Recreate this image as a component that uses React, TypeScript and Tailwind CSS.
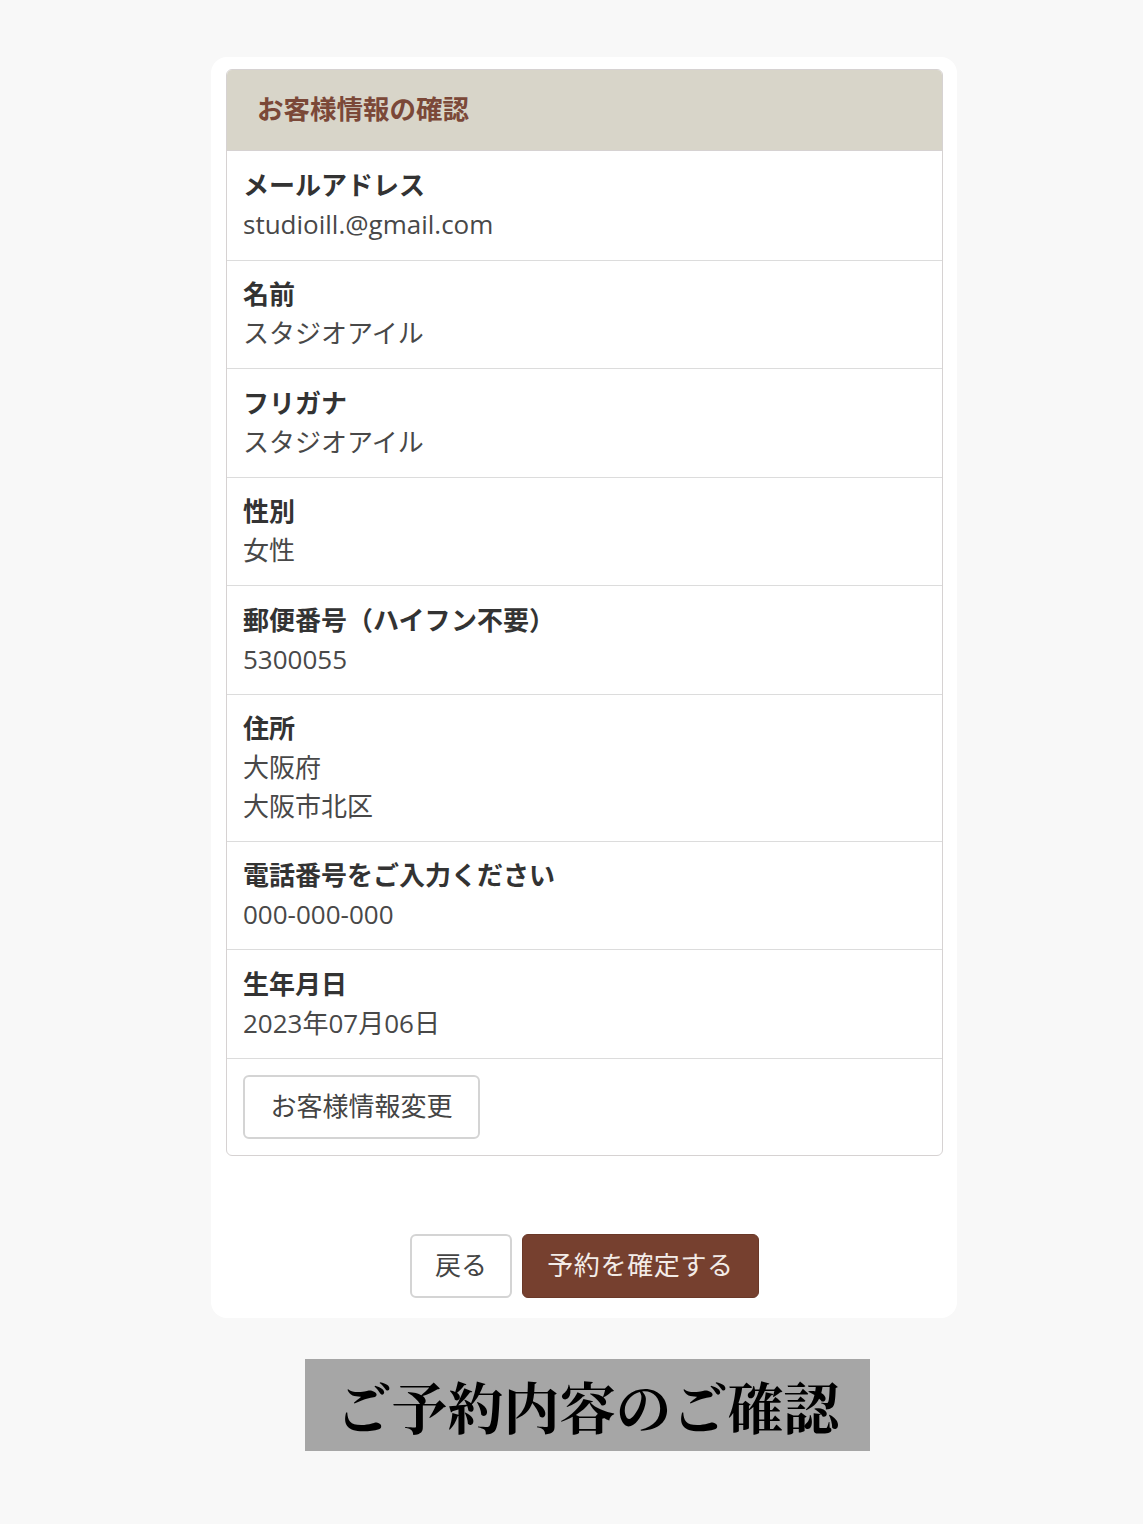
const rows: { label: string; values: string[] }[] = [
  { label: "メールアドレス", values: ["studioill.@gmail.com"] },
  { label: "名前", values: ["スタジオアイル"] },
  { label: "フリガナ", values: ["スタジオアイル"] },
  { label: "性別", values: ["女性"] },
  { label: "郵便番号（ハイフン不要）", values: ["5300055"] },
  { label: "住所", values: ["大阪府", "大阪市北区"] },
  { label: "電話番号をご入力ください", values: ["000-000-000"] },
  { label: "生年月日", values: ["2023年07月06日"] },
];

export default function App() {
  return (
    <div
      className="min-h-[1524px] w-full bg-[#f8f8f8] pt-[57px]"
      style={{ fontFamily: '"Open Sans", "Noto Sans CJK JP", sans-serif' }}
    >
      <div className="ml-[211px] w-[746px] rounded-[16px] bg-white pt-[12px] pb-[20px] pl-[15px] pr-[14px]">
        {/* Customer info panel */}
        <div className="overflow-hidden rounded-[6px] border border-[#d6d2d2]">
          <div className="flex h-[81px] items-center border-b border-[#d6d2d2] bg-[#d8d5c9] pl-[30px]">
            <span className="text-[26.5px] font-bold text-[#7b4838]">お客様情報の確認</span>
          </div>
          {rows.map((row, i) => (
            <div
              key={row.label}
              className={`px-4 pt-[14.5px] text-[26px] leading-[39px] ${row.values.length > 1 ? "h-[147px]" : "h-[108.5px]"} ${i > 0 ? "border-t border-[#dcdcdc]" : ""}`}
            >
              <div className="h-[39px] font-bold text-[#333333]">{row.label}</div>
              {row.values.map((v) => (
                <div key={v} className="h-[39px] text-[#484848]">{v}</div>
              ))}
            </div>
          ))}
          <div className="border-t border-[#dcdcdc] p-4">
            <button className="h-[64px] w-[237px] rounded-[6px] border-2 border-[#d4d4d4] bg-white text-[26px] text-[#444444]">
              お客様情報変更
            </button>
          </div>
        </div>

        {/* Actions */}
        <div className="mt-[78px] flex justify-center gap-[10px]">
          <button className="h-[64px] w-[102px] rounded-[6px] border-2 border-[#d4d4d4] bg-white text-[26px] text-[#444444]">
            戻る
          </button>
          <button className="h-[64px] w-[237px] rounded-[6px] border border-[#6a3828] bg-[#76402f] text-[26px] tracking-wide text-[#f3ece8]">
            予約を確定する
          </button>
        </div>
      </div>

      <div className="ml-[305px] mt-[41px] flex h-[92px] w-[565px] items-center justify-center bg-[#a6a6a6]">
        <span
          className="text-[56px] font-bold text-black"
          style={{ fontFamily: '"Noto Serif CJK JP", "Noto Sans CJK JP", serif' }}
        >
          ご予約内容のご確認
        </span>
      </div>
    </div>
  );
}
